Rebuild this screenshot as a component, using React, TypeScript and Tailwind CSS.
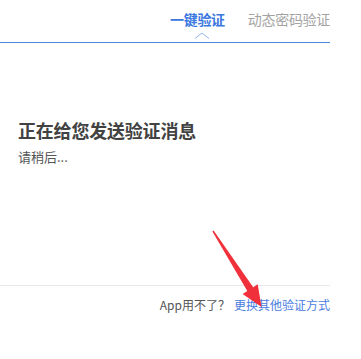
import React from "react";

const FONT = { fontFamily: '"Noto Sans CJK SC", "Liberation Sans", sans-serif' };

const tabs = [
  { id: "onekey", label: "一键验证", active: true },
  { id: "dynamic", label: "动态密码验证", active: false },
];

const App: React.FC = () => {
  return (
    <div className="relative w-[361px] h-[359px] bg-white overflow-hidden" style={FONT}>
      <div className="w-[330px]">
        {/* Tabs */}
        <div className="h-[43px] border-b border-[#4a88dc] flex justify-end gap-[23px] pt-[9px]">
          {tabs.map((tab) => (
            <div key={tab.id} className="flex flex-col items-center">
              <span
                className={`text-[14px] leading-5 tracking-[-0.3px] ${
                  tab.active ? "text-[#3a78e0] font-bold" : "text-[#a3a3a3]"
                }`}
              >
                {tab.label}
              </span>
              {tab.active && (
                <svg width="16" height="7" viewBox="0 0 16 7" className="mt-[3px] ml-[9px]">
                  <path d="M1 6.5 L8 1 L15 6.5" fill="none" stroke="#8fb3e8" strokeWidth="1" />
                </svg>
              )}
            </div>
          ))}
        </div>

        {/* Body */}
        <div className="h-[242px] pl-[18px] pt-[75px]">
          <h2 className="text-[18px] leading-6 font-bold text-[#424242] tracking-[-0.2px]">
            正在给您发送验证消息
          </h2>
          <p className="mt-[5px] text-[13px] leading-5 text-[#555]">请稍后...</p>
        </div>

        {/* Footer */}
        <div className="border-t border-[#e8e8e8] pt-[10px] flex justify-end text-[12px] leading-[18px]">
          <span className="text-[#555]">App用不了？</span>
          <a className="text-[#4a7de0] ml-[4px]">更换其他验证方式</a>
        </div>
      </div>

      {/* red annotation arrow */}
      <svg className="absolute left-0 top-0 pointer-events-none" width="361" height="359">
        <polygon
          points="212.4,231.4 213.6,230.6 253.2,287.2 257.7,284.3 261.5,307 242.6,293.9 247.3,291.0"
          fill="#f0303a"
        />
      </svg>
    </div>
  );
};

export default App;
